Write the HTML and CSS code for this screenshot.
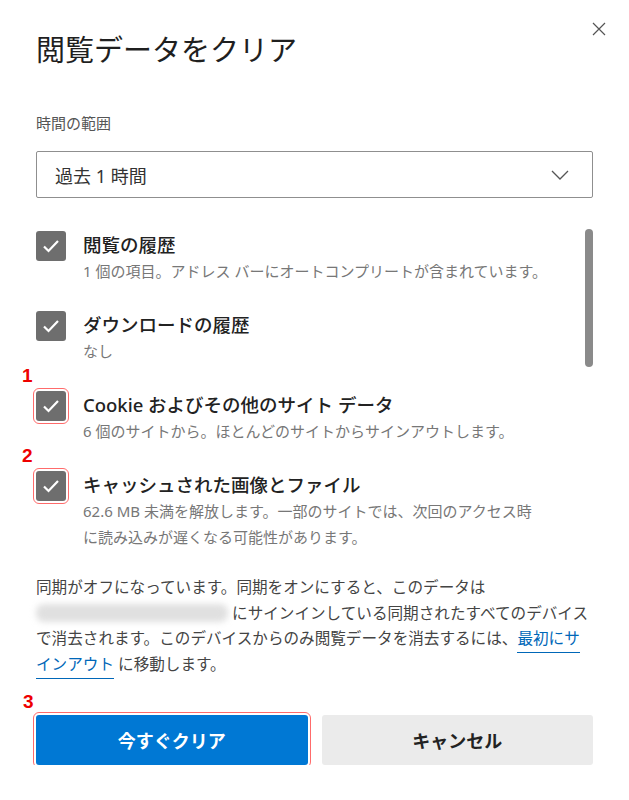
FILE: index.html
```html
<!DOCTYPE html>
<html lang="ja">

<head>
    <meta charset="UTF-8">
    <meta name="viewport" content="width=device-width, initial-scale=1.0">
    <title>閲覧データをクリア</title>
    <link rel="stylesheet" href="styles.css">
</head>

<body>

    <div class="dialog">
        <div class="header">
            <h1>閲覧データをクリア</h1>
            <button class="close" aria-label="閉じる">
                <svg width="14" height="14" viewBox="0 0 14 14">
                    <path d="M1 1 L13 13 M13 1 L1 13" stroke="#555" stroke-width="1.2" fill="none" />
                </svg>
            </button>
        </div>

        <div class="label">時間の範囲</div>
        <div class="select">
            <span>過去 1 時間</span>
            <svg width="18" height="10" viewBox="0 0 18 10">
                <path d="M1 1 L9 9 L17 1" stroke="#555" stroke-width="1.3" fill="none" />
            </svg>
        </div>

        <div class="list">
            <div class="items">
                <div class="item">
                    <div class="check">
                        <svg width="18" height="14" viewBox="0 0 18 14"><path d="M2 7.5 L6.5 12 L16 2" stroke="#fff" stroke-width="2.2" fill="none" /></svg>
                    </div>
                    <div class="text">
                        <div class="title">閲覧の履歴</div>
                        <div class="sub">1 個の項目。アドレス バーにオートコンプリートが含まれています。</div>
                    </div>
                </div>
                <div class="item">
                    <div class="check">
                        <svg width="18" height="14" viewBox="0 0 18 14"><path d="M2 7.5 L6.5 12 L16 2" stroke="#fff" stroke-width="2.2" fill="none" /></svg>
                    </div>
                    <div class="text">
                        <div class="title">ダウンロードの履歴</div>
                        <div class="sub">なし</div>
                    </div>
                </div>
                <div class="item">
                    <div class="check marked">
                        <span class="num">1</span>
                        <svg width="18" height="14" viewBox="0 0 18 14"><path d="M2 7.5 L6.5 12 L16 2" stroke="#fff" stroke-width="2.2" fill="none" /></svg>
                    </div>
                    <div class="text">
                        <div class="title">Cookie およびその他のサイト データ</div>
                        <div class="sub">6 個のサイトから。ほとんどのサイトからサインアウトします。</div>
                    </div>
                </div>
                <div class="item">
                    <div class="check marked">
                        <span class="num">2</span>
                        <svg width="18" height="14" viewBox="0 0 18 14"><path d="M2 7.5 L6.5 12 L16 2" stroke="#fff" stroke-width="2.2" fill="none" /></svg>
                    </div>
                    <div class="text">
                        <div class="title">キャッシュされた画像とファイル</div>
                        <div class="sub">62.6 MB 未満を解放します。一部のサイトでは、次回のアクセス時<br>に読み込みが遅くなる可能性があります。</div>
                    </div>
                </div>
            </div>
            <div class="scrollbar">
                <div class="thumb"></div>
            </div>
        </div>

        <p class="sync">
            同期がオフになっています。同期をオンにすると、このデータは<br>
            <span class="blur"></span> にサインインしている同期されたすべてのデバイス<br>
            で消去されます。このデバイスからのみ閲覧データを消去するには、<a href="#">最初にサ<br>インアウト</a> に移動します。
        </p>

        <div class="buttons">
            <button class="primary marked">
                <span class="num">3</span>
                今すぐクリア
            </button>
            <button class="secondary">キャンセル</button>
        </div>
    </div>

</body>

</html>
```

FILE: styles.css
```css
body {
    margin: 0;
    background-color: white;
    font-family: "Noto Sans", "Noto Sans CJK JP", sans-serif;
    color: #222;
}

.dialog {
    padding: 30px 36px 0 36px;
}

.header {
    display: flex;
    justify-content: space-between;
    align-items: flex-start;
}

h1 {
    margin: 0;
    font-size: 29px;
    font-weight: normal;
    line-height: 40px;
    color: #1f1f1f;
}

.close {
    background: none;
    border: none;
    padding: 0;
    margin: -8px -13px 0 0;
    cursor: pointer;
}

.label {
    margin-top: 42px;
    font-size: 15px;
    line-height: 22px;
    color: #555;
}

.select {
    box-sizing: border-box;
    margin-top: 17px;
    height: 47px;
    border: 1.5px solid #8f8f8f;
    border-radius: 2px;
    display: flex;
    align-items: center;
    justify-content: space-between;
    padding: 0 23px 0 18px;
    font-size: 18px;
    color: #333;
}

.list {
    margin-top: 33px;
    display: flex;
}

.items {
    flex: 1;
}

.item {
    display: flex;
    gap: 17px;
    margin-bottom: 27px;
}

.check {
    position: relative;
    width: 30px;
    height: 30px;
    background-color: #6e6e6e;
    border-radius: 3px;
    display: flex;
    align-items: center;
    justify-content: center;
    flex-shrink: 0;
}

.marked {
    outline: 1px solid #ff6b6b;
    outline-offset: 2px;
}

.num {
    position: absolute;
    left: -14px;
    top: -25px;
    color: #ee0000;
    font-family: "Liberation Sans", sans-serif;
    font-weight: bold;
    font-size: 19px;
    line-height: 20px;
}

.title {
    font-size: 18.5px;
    line-height: 26px;
    font-weight: 500;
    color: #222;
    margin-top: 1px;
}

.sub {
    font-size: 15px;
    line-height: 26px;
    color: #777;
}

.scrollbar {
    width: 8px;
    margin-left: 4px;
}

.thumb {
    height: 138px;
    margin-top: -2px;
    background-color: #8a8a8a;
    border-radius: 4px;
}

.sync {
    margin: -2px 0 0;
    font-size: 15.6px;
    line-height: 25.5px;
    color: #444;
    white-space: nowrap;
}

.blur {
    display: inline-block;
    width: 192px;
    height: 18px;
    vertical-align: -3px;
    background-color: #e0e0e0;
    border-radius: 8px;
    filter: blur(3px);
}

.sync a {
    color: #0067b8;
    text-decoration: none;
    border-bottom: 1px solid #0067b8;
    padding-bottom: 3px;
}

.buttons {
    margin-top: 38px;
    display: flex;
    gap: 14px;
}

.buttons button {
    flex: 1;
    height: 50px;
    border: none;
    border-radius: 3px;
    font-family: inherit;
    font-size: 18px;
    font-weight: bold;
    cursor: pointer;
    position: relative;
}

.primary {
    background-color: #0078d4;
    color: white;
}

.primary .num {
    left: -13px;
    top: -23px;
}

.secondary {
    background-color: #ebebeb;
    color: #222;
}
```
